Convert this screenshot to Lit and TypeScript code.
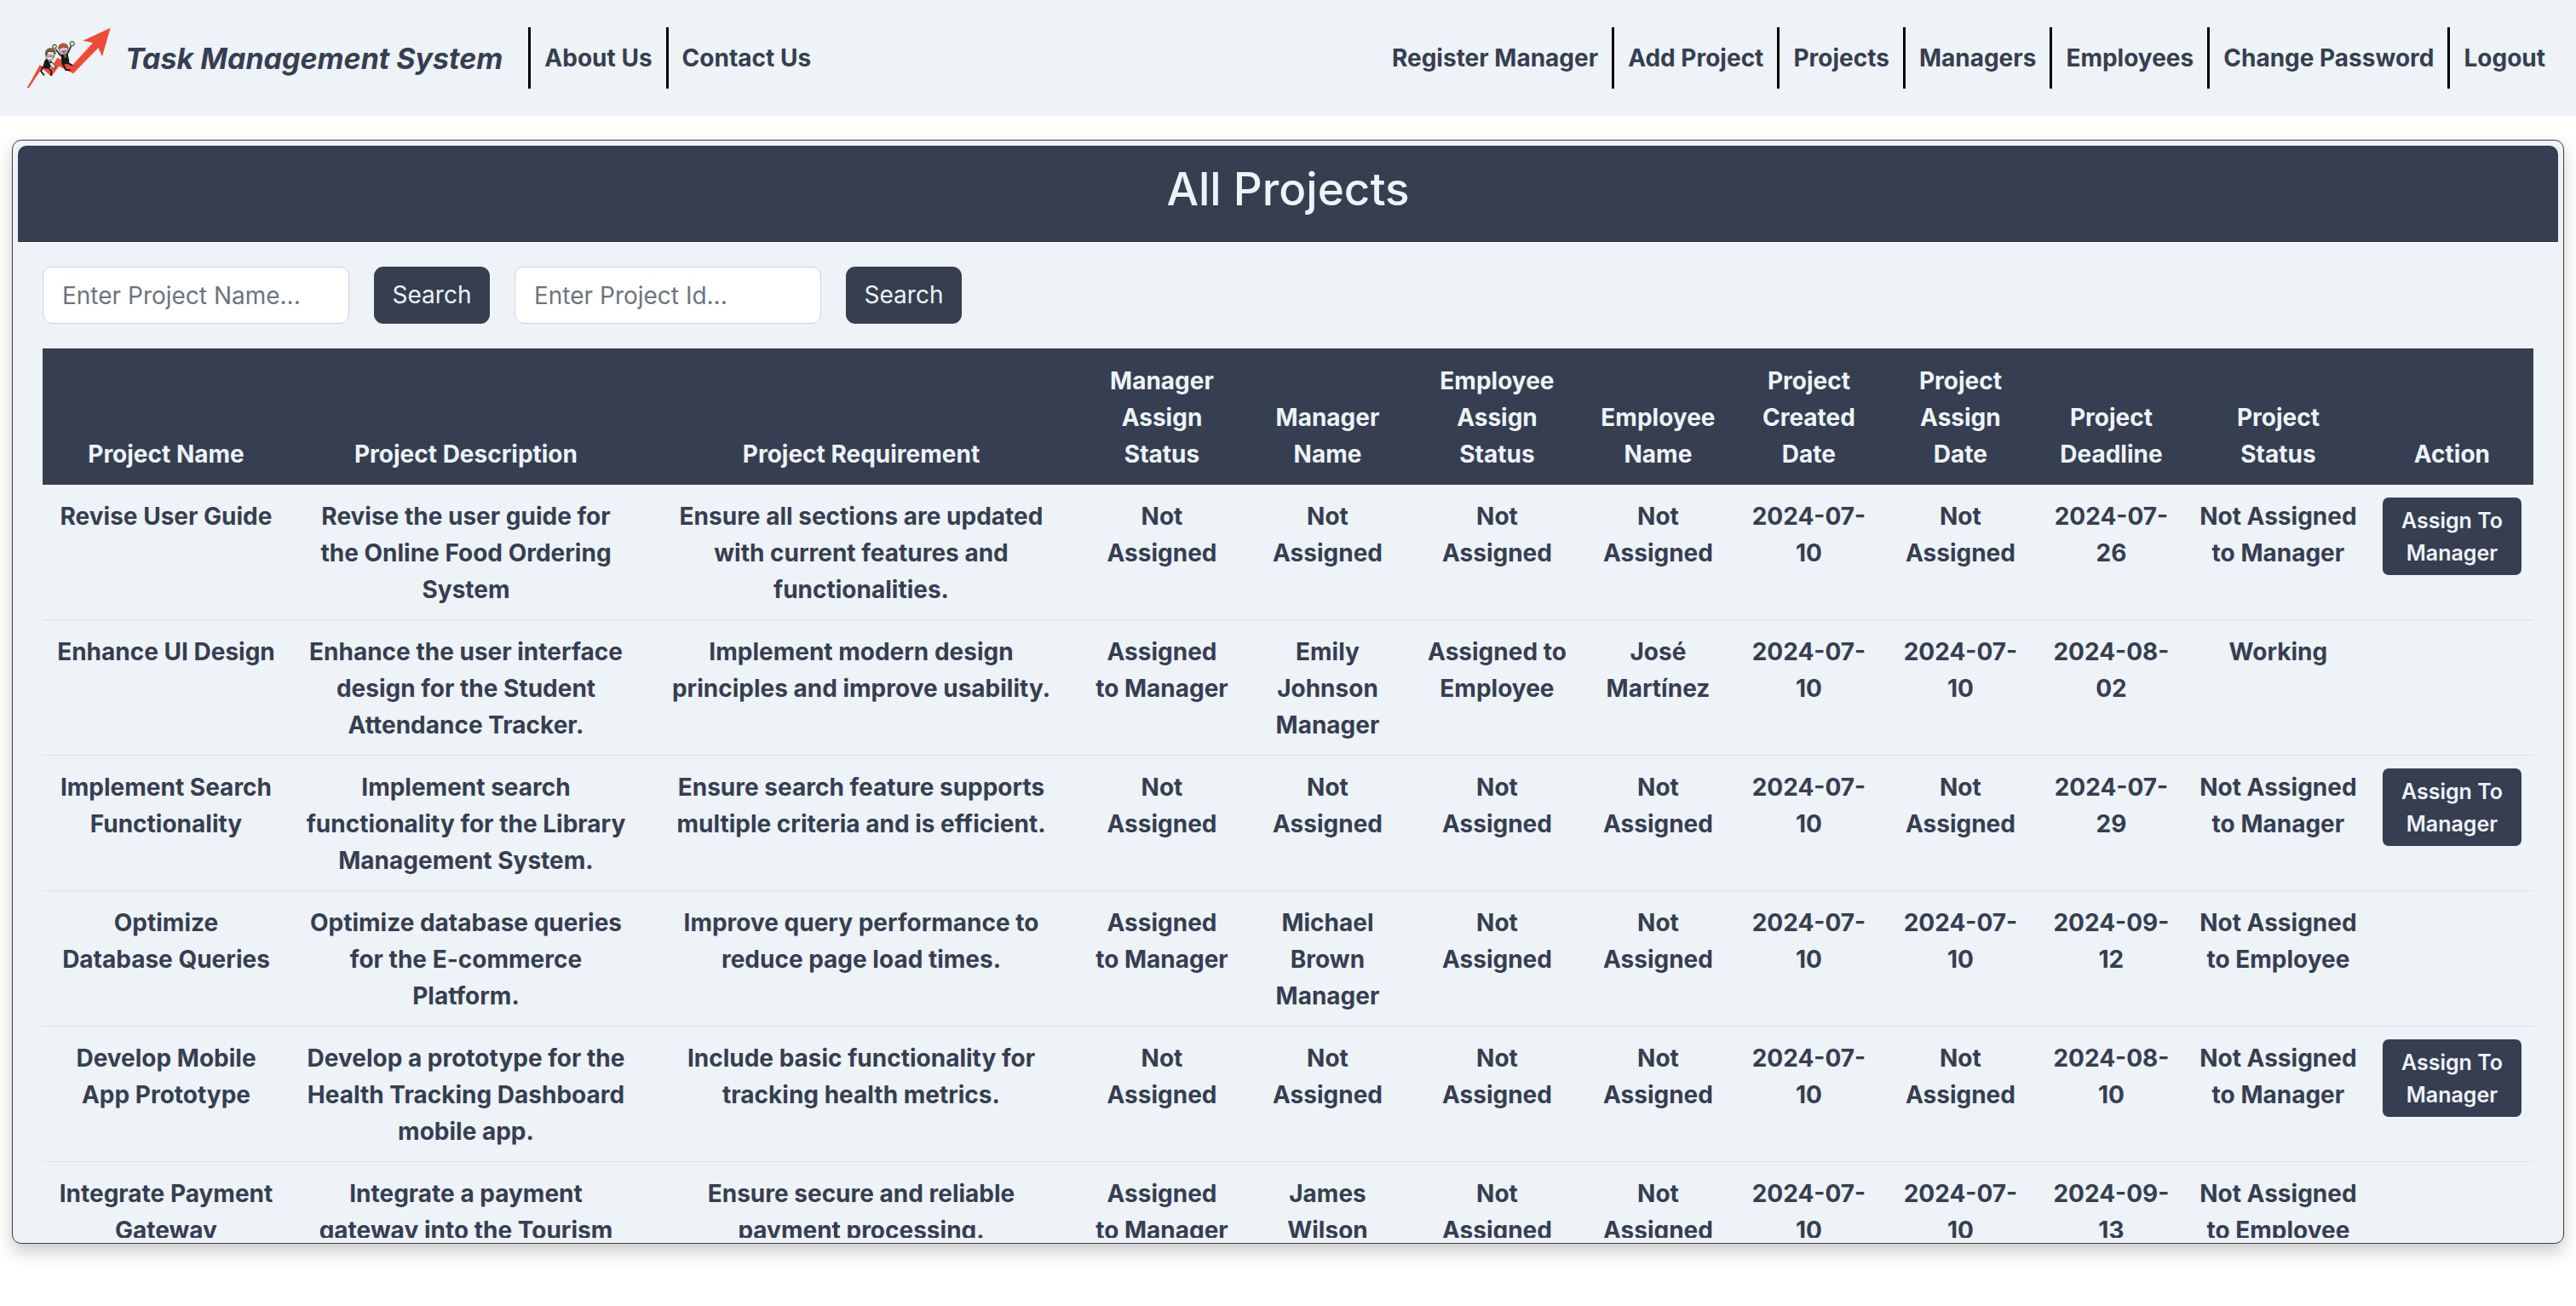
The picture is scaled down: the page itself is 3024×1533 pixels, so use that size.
import { LitElement, html, css, svg, nothing } from "lit";
import { customElement } from "lit/decorators.js";

interface Column {
  title: string;
  share: number;
}

interface Project {
  cells: string[];
  assignable: boolean;
}

const COLUMNS: Column[] = [
  { title: "Project Name", share: 290 },
  { title: "Project Description", share: 414 },
  { title: "Project Requirement", share: 514 },
  { title: "Manager Assign Status", share: 192 },
  { title: "Manager Name", share: 197 },
  { title: "Employee Assign Status", share: 201 },
  { title: "Employee Name", share: 177 },
  { title: "Project Created Date", share: 177 },
  { title: "Project Assign Date", share: 179 },
  { title: "Project Deadline", share: 175 },
  { title: "Project Status", share: 217 },
  { title: "Action", share: 191 },
];

const TOTAL_SHARE = COLUMNS.reduce((sum, c) => sum + c.share, 0);

const NA = "Not Assigned";
const TO_MANAGER = "Assigned to\u00a0Manager";
const DAY = "2024-07-10";

const PROJECTS: Project[] = [
  {
    cells: [
      "Revise User Guide",
      "Revise the user guide for the Online Food Ordering System",
      "Ensure all sections are updated with current features and functionalities.",
      NA, NA, NA, NA, DAY, NA, "2024-07-26", "Not Assigned to Manager",
    ],
    assignable: true,
  },
  {
    cells: [
      "Enhance UI Design",
      "Enhance the user interface design for the Student Attendance Tracker.",
      "Implement modern design principles and improve usability.",
      TO_MANAGER, "Emily Johnson Manager", "Assigned to Employee", "José Martínez",
      DAY, DAY, "2024-08-02", "Working",
    ],
    assignable: false,
  },
  {
    cells: [
      "Implement Search Functionality",
      "Implement search functionality for the Library Management System.",
      "Ensure search feature supports multiple criteria and is efficient.",
      NA, NA, NA, NA, DAY, NA, "2024-07-29", "Not Assigned to Manager",
    ],
    assignable: true,
  },
  {
    cells: [
      "Optimize Database\u00a0Queries",
      "Optimize database queries for the E-commerce Platform.",
      "Improve query performance to reduce page load times.",
      TO_MANAGER, "Michael Brown Manager", NA, NA, DAY, DAY, "2024-09-12",
      "Not Assigned to Employee",
    ],
    assignable: false,
  },
  {
    cells: [
      "Develop Mobile App Prototype",
      "Develop a prototype for the Health Tracking Dashboard mobile app.",
      "Include basic functionality for tracking health metrics.",
      NA, NA, NA, NA, DAY, NA, "2024-08-10", "Not Assigned to Manager",
    ],
    assignable: true,
  },
  {
    cells: [
      "Integrate Payment Gateway",
      "Integrate a payment gateway into the Tourism",
      "Ensure secure and reliable payment processing.",
      TO_MANAGER, "James Wilson", NA, NA, DAY, DAY, "2024-09-13",
      "Not Assigned to Employee",
    ],
    assignable: false,
  },
];

@customElement("app-logo")
export class AppLogo extends LitElement {
  static styles = css`
    :host {
      display: block;
      line-height: 0;
    }
    .mark {
      width: 106px;
      height: 82px;
    }
  `;

  private seatedRider() {
    return svg`
      <path d="M78 126 L92 132 L101 138 L96 152 L88 162 L66 158 L72 136 Z" fill="#17181b"/>
      <path d="M68 154 L60 170 L72 184 M88 158 L97 172 L96 186" stroke="#17181b" stroke-width="5" fill="none"/>
      <path d="M84 127 L96 130 L90 140 Z" fill="#8fd0c4"/>
      <path d="M90 142 Q100 134 106 146 Q114 152 110 160 Q100 162 94 152 Z" fill="#e8e4e2" stroke="#2b2b2e" stroke-width="3"/>
      <path d="M78 108 Q76 132 92 132 Q108 130 108 108 L104 100 L82 100 Z" fill="#ead9cd" stroke="#2f2823" stroke-width="2"/>
      <path d="M76 112 Q74 90 94 89 Q113 91 111 110 L106 102 Q94 98 84 101 L81 113 Z" fill="#8a5f38" stroke="#3b2a1b" stroke-width="2"/>
      <path d="M83 113 h9 v6 h-9 Z M95 114 h9 v6 h-9 Z M92 115 h3" fill="#dfe8ea" stroke="#5d5a58" stroke-width="2"/>
    `;
  }

  private cheeringRider() {
    return svg`
      <path d="M130 116 L112 92 M152 112 L166 82" stroke="#24252a" stroke-width="5" fill="none"/>
      <circle cx="108" cy="83" r="7" fill="#e9ddd4" stroke="#2f2823" stroke-width="3"/>
      <circle cx="170" cy="73" r="8" fill="#e9ddd4" stroke="#2f2823" stroke-width="3"/>
      <path d="M130 110 L154 108 L160 134 L158 144 L134 146 Z" fill="#17181b"/>
      <path d="M136 142 L148 165 L164 166 M154 140 L172 150" stroke="#17181b" stroke-width="6" fill="none"/>
      <path d="M141 110 L148 109 L149 124 L144 122 Z" fill="#5aa83c"/>
      <path d="M125 88 Q124 112 141 112 Q156 108 154 86 Z" fill="#ecd2c4" stroke="#2f2823" stroke-width="2"/>
      <path d="M122 92 Q121 74 138 72 Q157 73 156 90 L151 85 Q140 82 128 86 Z" fill="#d9532a" stroke="#5a2513" stroke-width="2"/>
      <path d="M133 97 Q142 100 148 95 Q147 108 140 107 Q134 105 133 97 Z" fill="#a45fa8" stroke="#4c2547" stroke-width="1"/>
    `;
  }

  render() {
    return html`
      <svg class="mark" viewBox="0 0 318 246" role="img" aria-label="Task Management System logo">
        <path
          d="M10 232 L56 148 L92 164 L118 122 L172 148 L243 70 L208 62 L305 17 L276 118 L262 88 L174 178 L124 152 L97 188 L64 160 L22 222 Z"
          fill="#f04b37"
        />
        <path d="M14 220 l6 3 M18 212 l5 5 M12 226 l7 1" stroke="#b8362a" stroke-width="2" />
        ${this.seatedRider()} ${this.cheeringRider()}
      </svg>
    `;
  }
}

@customElement("app-root")
export class AppRoot extends LitElement {
  static styles = css`
    :host {
      --ink: #363e51;
      --paper: #edf3f7;
      --rule: #dbe1e5;
      display: block;
      min-height: 100vh;
      background: #fff;
      color: var(--ink);
      font-family: Inter, "Liberation Sans", sans-serif;
      font-size: 28px;
      line-height: 43px;
    }
    * {
      box-sizing: border-box;
    }
    .navbar {
      display: flex;
      align-items: center;
      justify-content: space-between;
      padding: 32px 20px 32px 22px;
      background: var(--paper);
    }
    .group {
      display: flex;
      align-items: center;
    }
    .brand {
      display: flex;
      align-items: center;
      gap: 13px;
      height: 72px;
      padding: 0 30px 0 6px;
      color: inherit;
      font-size: 34px;
      font-style: italic;
      font-weight: 700;
      text-decoration: none;
    }
    .links {
      display: flex;
      margin: 0;
      padding: 0;
      list-style: none;
    }
    .link {
      display: flex;
      align-items: center;
      height: 72px;
      padding: 0 16px;
      color: inherit;
      font-weight: 700;
      text-decoration: none;
      white-space: nowrap;
    }
    .ruled {
      border-left: 3px solid #000;
    }
    .card {
      display: flex;
      flex-direction: column;
      height: calc(100vh - 237px);
      margin: 28px 14px 0;
      padding: 6px;
      border: 1px solid var(--ink);
      border-radius: 11px;
      background: var(--paper);
      box-shadow: 0 10px 20px rgba(0, 0, 0, 0.2);
    }
    .heading {
      flex: none;
      margin: 0;
      padding: 17px 29px 26px;
      border-bottom: 1px solid #2a3244;
      border-radius: 10px 10px 0 0;
      background: var(--ink);
      color: var(--paper);
      font-size: 53px;
      font-weight: 500;
      line-height: 69px;
      text-align: center;
    }
    .body {
      flex: 1;
      min-height: 0;
      overflow: hidden;
      padding: 29px 29px 0;
    }
    .filters {
      display: flex;
      gap: 29px;
      margin-bottom: 29px;
    }
    .filter {
      display: flex;
      gap: 29px;
    }
    .field {
      width: 360px;
      height: 67px;
      padding: 0 22px;
      border: 1px solid #ced4da;
      border-radius: 11px;
      background: #fff;
      color: var(--ink);
      font: inherit;
    }
    .field::placeholder {
      color: #6c757d;
      opacity: 1;
    }
    .search {
      width: 136px;
      height: 67px;
      padding: 0;
      border: 0;
      border-radius: 11px;
      background: var(--ink);
      color: var(--paper);
      font: inherit;
    }
    .projects {
      width: 100%;
      border-collapse: separate;
      border-spacing: 0;
      table-layout: fixed;
      text-align: center;
    }
    .title {
      padding: 17px 14px 14px;
      background: var(--ink);
      color: var(--paper);
      font-weight: 700;
      vertical-align: bottom;
    }
    .cell,
    .action {
      padding: 16px 14px 13px;
      border-bottom: 1px solid var(--rule);
      font-weight: 700;
      vertical-align: top;
    }
    .action {
      padding: 15px 14px 14px;
    }
    .assign {
      display: block;
      width: 100%;
      padding: 8px 14px 7px;
      border: 0;
      border-radius: 7px;
      background: var(--ink);
      color: var(--paper);
      font: inherit;
      font-size: 25px;
      font-weight: 600;
      line-height: 38px;
    }
  `;

  private links(names: string[], ruledFirst: boolean) {
    return html`
      <ul class="links">
        ${names.map(
          (name, i) => html`
            <li class=${i > 0 || ruledFirst ? "ruled" : "plain"}><a class="link" href="#">${name}</a></li>
          `
        )}
      </ul>
    `;
  }

  private filter(placeholder: string, label: string) {
    return html`
      <form class="filter" @submit=${(e: Event) => e.preventDefault()}>
        <input class="field" type="text" placeholder=${placeholder} aria-label=${label} />
        <button class="search" type="submit">Search</button>
      </form>
    `;
  }

  private row(project: Project) {
    return html`
      <tr>
        ${project.cells.map((text) => html`<td class="cell">${text}</td>`)}
        <td class="action">
          ${project.assignable ? html`<button class="assign" type="button">Assign To Manager</button>` : nothing}
        </td>
      </tr>
    `;
  }

  render() {
    return html`
      <nav class="navbar">
        <div class="group">
          <a class="brand" href="#"><app-logo></app-logo>Task Management System</a>
          ${this.links(["About Us", "Contact Us"], true)}
        </div>
        ${this.links(
          ["Register Manager", "Add Project", "Projects", "Managers", "Employees", "Change Password", "Logout"],
          false
        )}
      </nav>
      <main class="card">
        <h2 class="heading">All Projects</h2>
        <div class="body">
          <div class="filters">
            ${this.filter("Enter Project Name...", "Project name")}
            ${this.filter("Enter Project Id...", "Project id")}
          </div>
          <table class="projects">
            <colgroup>
              ${COLUMNS.map((c) => html`<col style="width: ${(c.share / TOTAL_SHARE) * 100}%" />`)}
            </colgroup>
            <thead>
              <tr>
                ${COLUMNS.map((c) => html`<th class="title" scope="col">${c.title}</th>`)}
              </tr>
            </thead>
            <tbody>
              ${PROJECTS.map((p) => this.row(p))}
            </tbody>
          </table>
        </div>
      </main>
    `;
  }
}
